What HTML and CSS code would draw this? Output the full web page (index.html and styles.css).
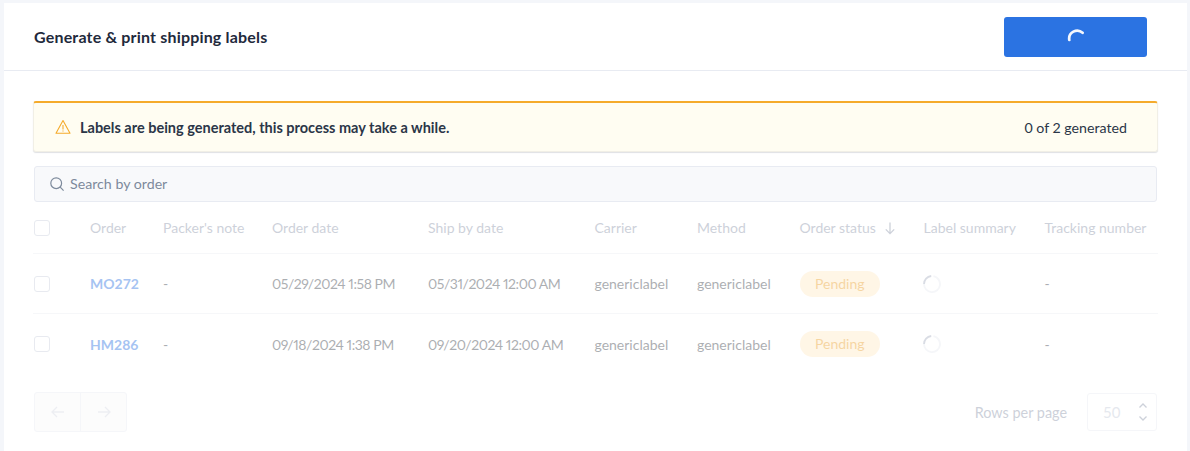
FILE: index.html
```html
<!DOCTYPE html>
<html lang="en">
<head>
<meta charset="utf-8">
<title>Generate &amp; print shipping labels</title>
<link rel="stylesheet" href="styles.css">
</head>
<body>
<main class="card">
  <header class="card-head">
    <h1 class="title">Generate &amp; print shipping labels</h1>
    <button class="primary" type="button" aria-label="Loading">
      <svg class="btn-spin" width="18" height="18" viewBox="0 0 18 18"><path d="M2.3 12A8 8 0 0 1 15.6 4.8" fill="none" stroke="#f4f7fd" stroke-width="2.7" stroke-linecap="round"/></svg>
    </button>
  </header>
  <section class="card-body">
    <div class="alert">
      <div class="alert-msg">
        <svg class="alert-icon" width="16" height="16" viewBox="0 0 16 16"><path d="M8 1.6 15 14.2H1Z" fill="none" stroke="#f5ab2c" stroke-width="1.1" stroke-linejoin="round"/><path d="M8 6v4.4M8 11.6v1" stroke="#f5ab2c" stroke-width="1.1" fill="none"/></svg>
        <strong>Labels are being generated, this process may take a while.</strong>
      </div>
      <span class="alert-count">0 of 2 generated</span>
    </div>
    <label class="search">
      <svg width="16" height="16" viewBox="0 0 16 16"><circle cx="7.2" cy="7.2" r="5.4" fill="none" stroke="#7d8a9c" stroke-width="1.2"/><path d="M11.2 11.2 14.6 14.6" stroke="#7d8a9c" stroke-width="1.2" fill="none"/></svg>
      <span>Search by order</span>
    </label>
    <div class="dim">
      <div class="row row-head">
        <span class="check"></span>
        <span>Order</span><span>Packer's note</span><span>Order date</span><span>Ship by date</span><span>Carrier</span><span>Method</span>
        <span class="sort">Order status
          <svg width="12" height="14" viewBox="0 0 12 14"><path d="M6 1.5V12.5M1.8 8.4 6 12.6 10.2 8.4" fill="none" stroke="#8a93a8" stroke-width="1.3"/></svg>
        </span>
        <span>Label summary</span><span>Tracking number</span>
      </div>
      <div class="row row-data">
        <span class="check"></span>
        <a class="order">MO272</a><span>-</span><span class="date">05/29/2024 1:58 PM</span><span class="date">05/31/2024 12:00 AM</span><span>genericlabel</span><span>genericlabel</span>
        <span><span class="pill">Pending</span></span>
        <svg class="mini-spin" width="18" height="18" viewBox="0 0 18 18"><path d="M10.5 1.2A8 8 0 1 1 1 9" fill="none" stroke="#e8ebf1" stroke-width="1.8"/><path d="M1 9A8 8 0 0 1 8.2 1" fill="none" stroke="#a6aec0" stroke-width="1.8"/></svg>
        <span>-</span>
      </div>
      <div class="row row-data">
        <span class="check"></span>
        <a class="order">HM286</a><span>-</span><span class="date">09/18/2024 1:38 PM</span><span class="date">09/20/2024 12:00 AM</span><span>genericlabel</span><span>genericlabel</span>
        <span><span class="pill">Pending</span></span>
        <svg class="mini-spin" width="18" height="18" viewBox="0 0 18 18"><path d="M10.5 1.2A8 8 0 1 1 1 9" fill="none" stroke="#e8ebf1" stroke-width="1.8"/><path d="M1 9A8 8 0 0 1 8.2 1" fill="none" stroke="#a6aec0" stroke-width="1.8"/></svg>
        <span>-</span>
      </div>
      <footer class="pager">
        <div class="pager-btns">
          <span class="pg"><svg width="16" height="12" viewBox="0 0 16 12"><path d="M14 6H2M7 1 2 6 7 11" fill="none" stroke="#d5d9e2" stroke-width="1.3"/></svg></span>
          <span class="pg"><svg width="16" height="12" viewBox="0 0 16 12"><path d="M2 6H14M9 1 14 6 9 11" fill="none" stroke="#d5d9e2" stroke-width="1.3"/></svg></span>
        </div>
        <div class="rows-per">
          <span>Rows per page</span>
          <span class="select"><span class="select-val">50</span>
            <svg width="10" height="20" viewBox="0 0 10 20"><path d="M1.5 5.5 5 2 8.5 5.5M1.5 14.5 5 18 8.5 14.5" fill="none" stroke="#8a93a8" stroke-width="1.3"/></svg>
          </span>
        </div>
      </footer>
    </div>
  </section>
</main>
</body>
</html>
```
FILE: styles.css
```css
* { box-sizing: border-box; }
html, body { margin: 0; height: 100%; overflow: hidden; }
body {
  background: #f4f6fa;
  padding: 3px 3px 0 4px;
  font-family: "Lato", "Liberation Sans", sans-serif;
  font-size: 14px;
  color: #2b3648;
}
.card { background: #fff; height: 448px; }
.card-head {
  height: 68px;
  display: flex;
  align-items: center;
  justify-content: space-between;
  padding: 0 40px 0 30px;
  border-bottom: 1px solid #e8ebf2;
}
.title { margin: 0; font-size: 16px; letter-spacing: .18px; font-weight: 700; color: #1f2a3c; }
.primary {
  width: 143px; height: 40px;
  border: 0; border-radius: 3px;
  background: #2b73e2;
  display: flex; align-items: center; justify-content: center;
}
.card-body { padding: 30px 29px 0 29px; }
.alert {
  height: 51px;
  display: flex;
  align-items: center;
  justify-content: space-between;
  padding: 0 30px 0 21px;
  background: #fffdf2;
  border: 1px solid #f1efe6;
  border-top: 2px solid #f5ab2c;
  border-radius: 3px;
  box-shadow: 0 1px 1px rgba(40, 50, 70, .15);
}
.alert-msg { display: flex; align-items: center; gap: 9px; }
.alert-msg strong { font-size: 14.5px; font-weight: 700; }
.alert-count { font-size: 14.2px; }
.search {
  height: 36px;
  margin: 14px 1px 0;
  display: flex;
  align-items: center;
  gap: 5px;
  padding: 0 14px 1px;
  background: #f8f9fb;
  border: 1px solid #e8ebf2;
  border-radius: 3px;
  color: #7d8a9c;
  font-size: 14.2px;
}
.dim { opacity: .42; }
.row {
  display: grid;
  grid-template-columns: 56px 73px 109px 156px 166.5px 102.5px 102.5px 124px 121px 1fr;
  align-items: center;
  padding-left: 1px;
  border-bottom: 1px solid #eceef3;
}
.row-head { height: 52px; color: #8a93a8; }
.row-data { height: 60px; color: #3a3f4a; }
.check {
  width: 16px; height: 16px;
  border: 1px solid #c9cfdc;
  border-radius: 3px;
}
.row-data:last-of-type { border-bottom: 0; }
.order { color: #2b73e2; font-weight: 700; }
.date { font-variant-numeric: proportional-nums; letter-spacing: -.45px; }
.sort { display: flex; align-items: center; gap: 8px; }
.pill {
  display: inline-block;
  padding: 0 15.5px;
  height: 26px;
  line-height: 26px;
  border-radius: 13px;
  background: #ffeac4;
  color: #ea9c1e;
}
.mini-spin { display: block; margin-left: -1px; }
.pager {
  display: flex;
  align-items: center;
  justify-content: space-between;
  margin: 18px 1px 0;
}
.pager-btns {
  display: flex;
  width: 93px;
  border: 1px solid #e8ebf2;
  border-radius: 3px;
  background: #f8f8fa;
}
.pg {
  flex: 1; height: 38px;
  display: flex; align-items: center; justify-content: center;
}
.pg + .pg { border-left: 1px solid #e8ebf2; }
.rows-per { display: flex; align-items: center; gap: 20px; color: #8a93a8; font-size: 14.4px; }
.select {
  width: 70px; height: 38px;
  display: flex; align-items: center; justify-content: space-between;
  padding: 0 8px 0 15px;
  border: 1px solid #e8ebf2;
  border-radius: 3px;
}
.select-val { color: #c3cad8; font-size: 15px; }
```
